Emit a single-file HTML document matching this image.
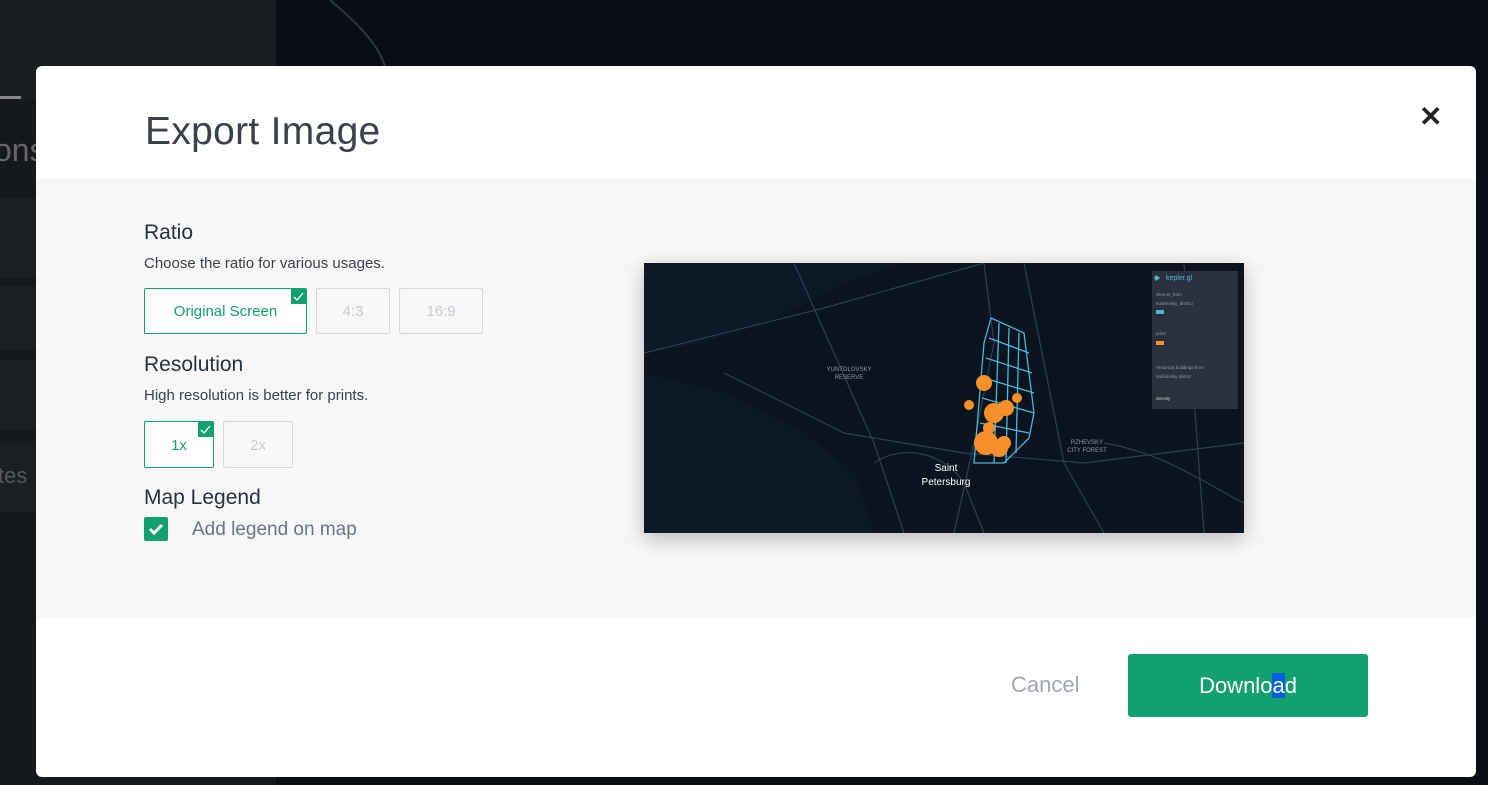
<!DOCTYPE html>
<html><head><style>
body{margin:0;width:1488px;height:785px;background:#0a0f17;position:relative;overflow:hidden;font-family:"Liberation Sans",sans-serif}
.side{position:absolute;left:0;top:0;width:276px;height:785px;background:#15181c}
.side .top{position:absolute;left:0;top:0;width:276px;height:100px;background:#1a1d21}
.panel{position:absolute;left:0;width:276px;background:#1b1f23}
.modal{position:absolute;left:36px;top:66px;width:1440px;height:711px;background:#fff;border-radius:6px;overflow:hidden}
.gray{position:absolute;left:0;top:113px;width:1440px;height:439px;background:#f7f7f7}
h1{position:absolute;left:109px;top:44px;margin:0;font-weight:normal;font-size:39px;color:#3a414c;letter-spacing:0.3px}
.close{position:absolute;left:1383px;top:34px;font-size:28px;font-weight:bold;color:#222}
.t{position:absolute;left:108px;font-size:21px;color:#29323c}
.s{position:absolute;left:108px;font-size:15px;color:#3a414c}
.opt{position:absolute;height:44px;border:1px solid #d3d8e0;border-radius:2px;box-sizing:border-box;color:#c8ccd3;font-size:15px;text-align:center;line-height:44px;background:#f7f7f7}
.opt.sel{border-color:#12a06e;color:#12a06e;background:#fff}
.chk{position:absolute;right:0;top:0;width:15px;height:15px;background:#12a06e;line-height:0}
.chk svg{display:block}
.map{position:absolute;left:608px;top:197px;width:600px;height:270px;background:#0f1b29;box-shadow:0 6px 20px rgba(0,0,0,.25)}
.btn{position:absolute;left:1092px;top:588px;width:240px;height:63px;background:#12a06e;border-radius:3px;color:#fff;font-size:22px;text-align:center;line-height:63px}
</style></head><body>
<div class="side"><div class="top"></div>
<div class="panel" style="top:198px;height:80px"></div>
<div class="panel" style="top:286px;height:64px"></div>
<div class="panel" style="top:360px;height:70px"></div>
<div class="panel" style="top:441px;height:71px"></div>
<div style="position:absolute;left:0;top:96px;width:21px;height:3px;background:#888"></div>
<div style="position:absolute;left:-6px;top:132px;font-size:32px;color:#666">ons</div>
<div style="position:absolute;left:-2px;top:463px;font-size:22px;color:#555">tes</div>
</div>
<svg style="position:absolute;left:276px;top:0" width="1212" height="785"><path d="M54 0 C90 30 105 50 110 70" stroke="#2a3644" stroke-width="2" fill="none"/></svg>
<div class="modal">
<div class="gray"></div>
<h1>Export Image</h1>
<div class="close">✕</div>
<div class="t" style="top:155px">Ratio</div>
<div class="s" style="top:189px">Choose the ratio for various usages.</div>
<div class="opt sel" style="left:108px;top:222px;width:163px;height:46px;line-height:46px">Original Screen<div class="chk"><svg width="15" height="15"><path d="M3 8l3 3 6-7" stroke="#fff" stroke-width="1.3" fill="none"/></svg></div></div>
<div class="opt" style="left:280px;top:222px;width:74px;height:46px;line-height:46px">4:3</div>
<div class="opt" style="left:363px;top:222px;width:84px;height:46px;line-height:46px">16:9</div>
<div class="t" style="top:287px">Resolution</div>
<div class="s" style="top:321px">High resolution is better for prints.</div>
<div class="opt sel" style="left:108px;top:355px;width:70px;height:47px;line-height:47px">1x<div class="chk"><svg width="15" height="15"><path d="M3 8l3 3 6-7" stroke="#fff" stroke-width="1.3" fill="none"/></svg></div></div>
<div class="opt" style="left:187px;top:355px;width:70px;height:47px;line-height:47px">2x</div>
<div class="t" style="top:420px">Map Legend</div>
<div style="position:absolute;left:108px;top:451px;width:24px;height:24px;background:#12a06e;border-radius:2px"><svg width="24" height="24" style="display:block"><path d="M6 12l4 4 8-8" stroke="#fff" stroke-width="3" fill="none"/></svg></div>
<div style="position:absolute;left:156px;top:453px;font-size:19px;color:#6a7485">Add legend on map</div>
<div class="map"><svg width="600" height="270">
<rect width="600" height="270" fill="#0d1926"/>
<path d="M0 90 L60 80 L120 60 L200 20 L260 0 L600 0 L600 270 L230 270 L210 210 L160 170 L80 130 L0 110Z" fill="#0b1520"/>
<g stroke="#2c3e50" stroke-width="1.2" fill="none">
<path d="M0 90 L180 45 L340 0"/><path d="M150 0 L190 90 L230 180 L260 270"/><path d="M80 110 L200 170 L320 190 L440 200 L600 180"/><path d="M340 0 L350 80 L330 180 L310 270"/><path d="M380 0 L400 100 L420 200 L460 270"/><path d="M230 200 C260 180 300 190 320 220 L340 270"/><path d="M460 180 C520 190 560 220 600 240"/><path d="M540 0 L560 270"/>
</g>
<g stroke="#4fb5d9" stroke-width="1.3" fill="none">
<path d="M347 55 L380 70 L390 150 L385 175 L360 200 L330 200 L335 140 L340 80 Z"/><path d="M345 75 L385 90"/><path d="M342 95 L388 110"/><path d="M340 115 L390 130"/><path d="M338 135 L390 150"/><path d="M336 160 L385 170"/><path d="M355 60 L350 200"/><path d="M365 65 L362 200"/><path d="M375 70 L372 190"/>
</g>
<g fill="#f7902a">
<circle cx="340" cy="120" r="8"/><circle cx="350" cy="150" r="10"/><circle cx="362" cy="145" r="8"/><circle cx="342" cy="180" r="12"/><circle cx="355" cy="185" r="9"/><circle cx="325" cy="142" r="5"/><circle cx="373" cy="135" r="5"/><circle cx="345" cy="165" r="6"/><circle cx="360" cy="180" r="7"/>
</g>
<text x="302" y="208" fill="#fff" font-size="10" text-anchor="middle" font-family="Liberation Sans">Saint</text>
<text x="302" y="222" fill="#fff" font-size="10" text-anchor="middle" font-family="Liberation Sans">Petersburg</text>
<text x="205" y="108" fill="#8a96a3" font-size="6" text-anchor="middle">YUNTOLOVSKY</text><text x="205" y="116" fill="#8a96a3" font-size="6" text-anchor="middle">RESERVE</text>
<text x="443" y="181" fill="#8a96a3" font-size="6" text-anchor="middle">RZHEVSKY</text><text x="443" y="189" fill="#8a96a3" font-size="6" text-anchor="middle">CITY FOREST</text>
<rect x="508" y="8" width="86" height="138" fill="#29323c"/>
<text x="522" y="17" fill="#4fb5d9" font-size="7">kepler.gl</text><path d="M512 12 l4 3 -4 3 -2-3z" fill="#4fb5d9"/>
<text x="512" y="33" fill="#8a96a3" font-size="4.5">Streets_from</text><text x="512" y="42" fill="#8a96a3" font-size="4.5">Kalininskiy_district</text>
<rect x="512" y="47" width="8" height="4" fill="#4fb5d9"/><text x="512" y="72" fill="#8a96a3" font-size="4.5">point</text><rect x="512" y="78" width="8" height="4" fill="#f7902a"/>
<text x="512" y="106" fill="#8a96a3" font-size="4.5">Historical buildings from</text><text x="512" y="115" fill="#8a96a3" font-size="4.5">Kalininskiy district</text><text x="512" y="137" fill="#ccc" font-size="4.5">density</text>
</svg></div>
<div style="position:absolute;left:975px;top:606px;font-size:22px;color:#a0a7b4">Cancel</div>
<div class="btn">Downlo<span style="background:#0060df">a</span>d</div>
</div>
</body></html>
